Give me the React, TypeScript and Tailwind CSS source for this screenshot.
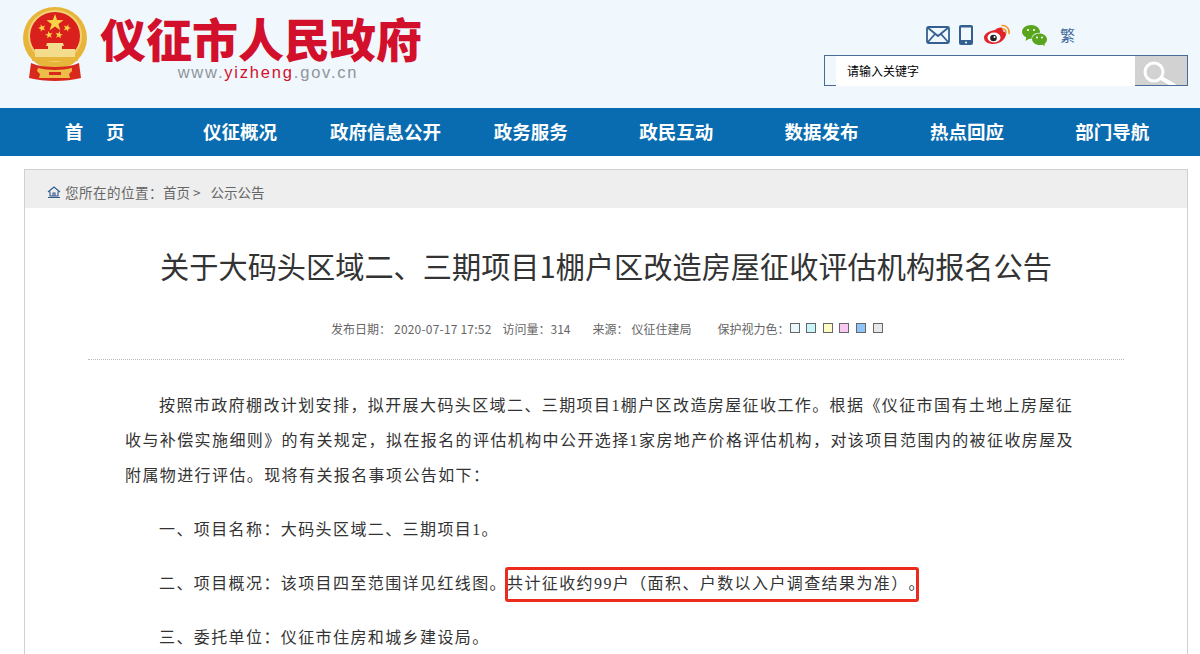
import React from 'react';

const navItems = ['首　 页', '仪征概况', '政府信息公开', '政务服务', '政民互动', '数据发布', '热点回应', '部门导航'];
const swatches = ['bg-[#e8f8fd]', 'bg-[#c8f4fa]', 'bg-[#fdfbc8]', 'bg-[#f8c8f4]', 'bg-[#90c4f8]', 'bg-[#e8e8e8]'];

const star = (cx: number, cy: number, r: number, rot = 0) => {
  const pts: string[] = [];
  for (let i = 0; i < 10; i++) {
    const rad = i % 2 === 0 ? r : r * 0.4;
    const a = ((i * 36 - 90 + rot) * Math.PI) / 180;
    pts.push(`${(cx + rad * Math.cos(a)).toFixed(1)},${(cy + rad * Math.sin(a)).toFixed(1)}`);
  }
  return pts.join(' ');
};

const Emblem = () => (
  <svg width="66" height="76" viewBox="0 0 66 76">
    <ellipse cx="32" cy="31" rx="32" ry="31" fill="#e6b53a" />
    <ellipse cx="32" cy="29" rx="27" ry="26" fill="#f2d477" />
    <ellipse cx="32" cy="29" rx="25" ry="24" fill="#d9201c" />
    <polygon points={star(32, 16, 9)} fill="#f6d548" />
    <polygon points={star(19, 21, 4, -20)} fill="#f6d548" />
    <polygon points={star(26, 28, 4, -10)} fill="#f6d548" />
    <polygon points={star(36, 28, 4, 10)} fill="#f6d548" />
    <polygon points={star(44, 21, 4, 20)} fill="#f6d548" />
    <path d="M24 36h16l1 3h-2v3h13v8H12v-8h13v-3h-2z" fill="#f3dc8c" />
    <rect x="9" y="50" width="46" height="4" fill="#e6b53a" />
    <path d="M8 56c7 3 15 4 24 4s17-1 24-4l2 15c-8 2-17 3-26 3s-18-1-26-3z" fill="#d9281c" />
    <path d="M15 61c5 1 11 2 17 2s12-1 17-2v3l-3 3 1 4H16l1-4-3-3z" fill="#ecbe48" />
    <rect x="26" y="65" width="12" height="3" fill="#d9281c" />
  </svg>
);

export default function App() {
  return (
    <div className="h-[654px] overflow-hidden bg-white font-['Noto_Sans_CJK_SC',sans-serif]">
      {/* Header */}
      <div className="h-[108px] bg-[#f0f8fe] flex justify-between pl-[23px] pr-[12px]">
        <div className="flex pt-[7px]">
          <Emblem />
          <div className="ml-[11px] flex flex-col items-center">
            <div className="text-[46px] leading-[46px] font-black text-[#d3102c] mt-[7px] whitespace-nowrap">仪征市人民政府</div>
            <div className="font-['Liberation_Sans',sans-serif] text-[16.500px] leading-[18px] tracking-[1.800px] text-[#8f959a] mt-[3px] ml-[14px]">
              www.<span className="text-[#d3102c]">yizheng</span>.gov.cn
            </div>
          </div>
        </div>
        <div className="flex flex-col items-end">
          <div className="flex items-center h-[20px] mt-[25px] mr-[113px]">
            <svg width="24" height="18" viewBox="0 0 24 18" fill="none" stroke="#34608f" strokeWidth="1.800">
              <rect x="1" y="1" width="22" height="16" rx="1.500" />
              <path d="M1.500 1.500L12 10l10.500-8.500M1.500 16.500L9 8M22.500 16.500L15 8" />
            </svg>
            <svg width="14" height="20" viewBox="0 0 14 20" className="ml-[9px]">
              <rect width="14" height="20" rx="2" fill="#34608f" />
              <rect x="2" y="2.500" width="10" height="12.500" fill="#f0f8fe" />
              <circle cx="7" cy="17.500" r="1.100" fill="#f0f8fe" />
            </svg>
            <svg width="27" height="22" viewBox="0 0 27 22" className="ml-[11px]">
              <path d="M11 6c4-3 7-3 8-1 .6 1.300 0 2.500 0 2.500 2-.3 3.500 1 3 3.200C21 16 15 20 9.500 20 4.500 20 0 18 0 13.500 0 10.500 4 7 11 6z" fill="#e0242a" />
              <ellipse cx="10" cy="13.500" rx="6.500" ry="5" fill="#fff" />
              <circle cx="9.500" cy="14" r="3.300" fill="#222" />
              <circle cx="10.500" cy="13" r="1" fill="#fff" />
              <path d="M18 1.500c4-.5 8 3 7 8M18.500 5c2.500-.3 4 1.500 3.500 4" fill="none" stroke="#f09a28" strokeWidth="1.600" strokeLinecap="round" />
            </svg>
            <svg width="25" height="21" viewBox="0 0 25 21" className="ml-[11px]">
              <path d="M9 0c5 0 9 3.200 9 7 0 .3 0 .5-.1.800C13 7.500 9.500 10.500 9.500 14c-.8 0-1.500-.1-2.300-.3L3.500 16l.8-3.400C1.700 11 0 9.200 0 7c0-3.800 4-7 9-7z" fill="#5aa51e" />
              <path d="M17.500 8.500c4.200 0 7.500 2.700 7.500 6 0 1.800-1 3.400-2.600 4.500l.6 2-2.800-1.300c-.9.300-1.800.4-2.700.4-4.200 0-7.500-2.700-7.500-6s3.300-5.600 7.500-5.600z" fill="#5aa51e" />
              <circle cx="6" cy="5" r="1.100" fill="#fff" />
              <circle cx="12" cy="5" r="1.100" fill="#fff" />
              <circle cx="15" cy="12.500" r="1" fill="#fff" />
              <circle cx="20" cy="12.500" r="1" fill="#fff" />
            </svg>
            <span className="ml-[13px] text-[15px] leading-[20px] text-[#3f6a9c]">繁</span>
          </div>
          <div className="mt-[10px] w-[364px] h-[31px] border border-[#4a6b96] flex pl-[11px]">
            <div className="h-[30px] w-[299px] bg-white text-[12px] leading-[30px] pl-[11px] text-black">请输入关键字</div>
            <div className="h-[29px] w-[52px] bg-[#d2d2d2] overflow-hidden">
              <svg width="52" height="29" viewBox="0 0 52 29" fill="none" stroke="#fff">
                <circle cx="19" cy="16" r="9" strokeWidth="3" />
                <path d="M26 22l14 8" strokeWidth="4" />
              </svg>
            </div>
          </div>
        </div>
      </div>

      {/* Nav */}
      <div className="h-[48px] bg-[#0a6cb0] pl-[22px] pr-[15px] grid grid-cols-8">
        {navItems.map((item) => (
          <div key={item} className="text-center text-white font-bold text-[18.500px] leading-[46px] whitespace-pre">{item}</div>
        ))}
      </div>

      {/* Content card */}
      <div className="mt-[13px] ml-[24px] mr-[12px] border border-[#d0d0d0]">
        <div className="h-[38px] bg-[#eeeeee] pl-[22px] pt-[6px] flex items-center text-[13.500px] text-[#666]">
          <svg width="14" height="14" viewBox="0 0 14 14" fill="none" stroke="#2f5a8c" strokeWidth="1.100">
            <path d="M1 7l6-5 6 5M3 6.500V11h8V6.500M6 11V8h2v3M1 12.500h12" />
          </svg>
          <span className="ml-[4px] tracking-[0.500px]">您所在的位置：</span>
          <span>首页 &gt;</span>
          <span className="ml-[10px]">公示公告</span>
        </div>

        <h1 className="text-center text-[29.200px] leading-[40px] font-normal text-[#333] mt-[37px] whitespace-nowrap">关于大码头区域二、三期项目1棚户区改造房屋征收评估机构报名公告</h1>

        <div className="mx-[63px] mt-[32px] h-[43px] border-b border-dotted border-[#bbb] flex text-[12px] leading-[24px] text-[#666] pl-[243px]">
          <span>发布日期：</span>
          <span className="ml-[3px] tracking-[0.200px]">2020-07-17 17:52</span>
          <span className="ml-[11px]">访问量：314</span>
          <span className="ml-[22px]">来源：</span>
          <span className="ml-[3px]">仪征住建局</span>
          <span className="ml-[26px]">保护视力色：</span>
          <div className="flex gap-[6.600px] pt-[6px]">
            {swatches.map((c) => (
              <div key={c} className={`w-[10px] h-[10px] border border-[#666] ${c}`} />
            ))}
          </div>
        </div>

        <div className="font-['Liberation_Serif','Noto_Sans_CJK_SC',serif] [text-spacing-trim:space-all] pl-[100px] pr-[112px] pt-[28px] text-[16px] leading-[35px] tracking-[1.400px] text-[#333]">
          <p className="indent-[34px] mb-[19px]">按照市政府棚改计划安排，拟开展大码头区域二、三期项目1棚户区改造房屋征收工作。根据《仪征市国有土地上房屋征收与补偿实施细则》的有关规定，拟在报名的评估机构中公开选择1家房地产价格评估机构，对该项目范围内的被征收房屋及附属物进行评估。现将有关报名事项公告如下：</p>
          <p className="indent-[34px] mb-[19px]">一、项目名称：大码头区域二、三期项目1。</p>
          <p className="indent-[34px] mb-[19px]">
            二、项目概况：该项目四至范围详见红线图。
            <span className="relative">
              共计征收约99户（面积、户数以入户调查结果为准）。
              <span className="absolute left-[-2px] right-[7px] top-[-8px] bottom-[-10px] border-[3px] border-[#ec2a1e] rounded-[3px]" />
            </span>
          </p>
          <p className="indent-[34px]">三、委托单位：仪征市住房和城乡建设局。</p>
        </div>
      </div>
    </div>
  );
}
